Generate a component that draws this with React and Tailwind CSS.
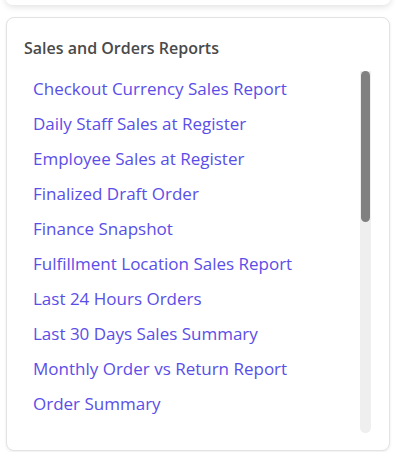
const REPORTS = [
  'Checkout Currency Sales Report',
  'Daily Staff Sales at Register',
  'Employee Sales at Register',
  'Finalized Draft Order',
  'Finance Snapshot',
  'Fulfillment Location Sales Report',
  'Last 24 Hours Orders',
  'Last 30 Days Sales Summary',
  'Monthly Order vs Return Report',
  'Order Summary',
  'Orders per Sales Channel',
]

export default function App() {
  return (
    <div className="w-[396px] h-[452px] bg-white overflow-hidden relative" style={{ fontFamily: '"Open Sans", sans-serif' }}>
      <div className="absolute left-[5px] right-[5px] top-[-40px] h-[45px] bg-white rounded-lg shadow-[0_2px_6px_rgba(0,0,0,0.12)]" />
      <div className="mt-[17px] mx-[6px] h-[434px] bg-white border border-[#e3e3e3] rounded-lg shadow-[0_1px_3px_rgba(0,0,0,0.08)] flex flex-col">
        <h2 className="px-[17px] pt-[19px] text-[16px] leading-[22px] font-semibold text-[#4a4a4a]">Sales and Orders Reports</h2>
        <div className="flex mt-[12px] pr-[18px] h-[362px]">
          <ul className="flex-1 overflow-hidden pl-[26px]">
            {REPORTS.map((r) => (
              <li key={r} className="h-[35px] flex items-center text-[17px] text-[#5a4ee8] whitespace-nowrap">{r}</li>
            ))}
          </ul>
          <div className="w-[11px] bg-[#efefef] rounded-b-md flex flex-col">
            <div className="h-[151px] mx-[1px] bg-[#808080] rounded-full" />
          </div>
        </div>
      </div>
    </div>
  )
}
